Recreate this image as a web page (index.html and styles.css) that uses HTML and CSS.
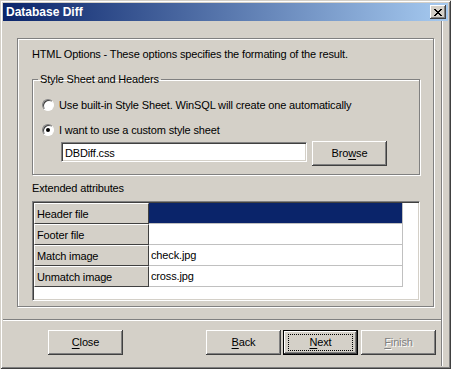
FILE: index.html
```html
<!DOCTYPE html>
<html lang="en">
<head>
    <meta charset="UTF-8">
    <title>Database Diff</title>
    <link rel="stylesheet" href="styles.css">
</head>
<body>
    <div class="window">
        <div class="titlebar">
            <span class="title">Database Diff</span>
            <div class="close-btn">
                <svg width="8" height="7" viewBox="0 0 8 7">
                    <path d="M0 0h2v1h1v1h2v-1h1v-1h2v1h-1v1h-1v1h-1v1h1v1h1v1h1v1h-2v-1h-1v-1h-2v1h-1v1h-2v-1h1v-1h1v-1h1v-1h-1v-1h-1v-1h-1z" fill="#000"/>
                </svg>
            </div>
        </div>

        <div class="content">
            <div class="panel">
                <p class="intro">HTML Options - These options specifies the formating of the result.</p>

                <fieldset class="group">
                    <legend>Style Sheet and Headers</legend>
                    <div class="radio-row first">
                        <span class="radio"></span>
                        <span>Use built-in Style Sheet. WinSQL will create one automatically</span>
                    </div>
                    <div class="radio-row">
                        <span class="radio checked"></span>
                        <span>I want to use a custom style sheet</span>
                    </div>
                    <div class="file-row">
                        <div class="textbox">DBDiff.css</div>
                        <div class="btn browse">Bro<u>w</u>se</div>
                    </div>
                </fieldset>

                <div class="section-label">Extended attributes</div>
                <div class="grid">
                    <table>
                        <tr>
                            <th>Header file</th>
                            <td class="selected"></td>
                        </tr>
                        <tr>
                            <th>Footer file</th>
                            <td></td>
                        </tr>
                        <tr>
                            <th>Match image</th>
                            <td>check.jpg</td>
                        </tr>
                        <tr>
                            <th>Unmatch image</th>
                            <td>cross.jpg</td>
                        </tr>
                    </table>
                </div>
            </div>

            <div class="separator"></div>

            <div class="buttons">
                <div class="btn"><u>C</u>lose</div>
                <div class="spacer"></div>
                <div class="btn"><u>B</u>ack</div>
                <div class="btn default"><span class="focus"><u>N</u>ext</span></div>
                <div class="btn disabled"><u>F</u>inish</div>
            </div>
        </div>
    </div>
</body>
</html>
```

FILE: styles.css
```css
body {
    margin: 0;
    background: #d4d0c8;
    font-family: "Liberation Sans", Arial, sans-serif;
    font-size: 11px;
    letter-spacing: -0.15px;
    color: #000;
}

.window {
    width: 451px;
    height: 369px;
    box-sizing: border-box;
    padding: 3px;
    background: #d4d0c8;
    box-shadow: inset 1px 1px #d4d0c8, inset -1px -1px #404040,
        inset 2px 2px #fff, inset -2px -2px #808080;
    display: flex;
    flex-direction: column;
}

.titlebar {
    height: 18px;
    display: flex;
    align-items: center;
    padding-left: 3px;
    background: linear-gradient(to right, #0a246a, #a6caf0);
}

.title {
    color: #fff;
    font-weight: bold;
    font-size: 12px;
    letter-spacing: 0;
}

.close-btn {
    width: 16px;
    height: 14px;
    box-sizing: border-box;
    margin-left: auto;
    margin-right: 2px;
    background: #d4d0c8;
    box-shadow: inset -1px -1px #404040, inset 1px 1px #fff,
        inset -2px -2px #808080;
    display: flex;
    align-items: center;
    justify-content: center;
}

.content {
    flex: 1;
    margin-right: 6px;
    border-right: 1px solid #808080;
    box-shadow: 1px 0 #fff;
}

.panel {
    margin: 17px 7px 0 14px;
    padding: 9px 13px 5px 14px;
    border: 1px solid #808080;
    box-shadow: inset 1px 1px #fff, 1px 1px #fff;
}

.intro {
    margin: 0;
    line-height: 13px;
}

/* group box */
.group {
    margin: 12px 0 0 0;
    padding: 0 0 8px 0;
    min-width: 0;
    border: 1px solid #808080;
    box-shadow: inset 1px 1px #fff, 1px 1px #fff;
}

.group legend {
    margin-left: 5px;
    padding: 0 2px;
    line-height: 13px;
}

.radio-row {
    display: flex;
    align-items: center;
    height: 16px;
    margin: 9px 0 0 9px;
    gap: 5px;
}

.radio-row.first {
    margin-top: 11px;
}

.radio {
    width: 12px;
    height: 12px;
    box-sizing: border-box;
    border-radius: 50%;
    background: #fff;
    border: 1px solid;
    border-color: #808080 #fff #fff #808080;
    box-shadow: inset 1px 1px #404040;
    position: relative;
}

.radio.checked::after {
    content: "";
    position: absolute;
    left: 3px;
    top: 3px;
    width: 4px;
    height: 4px;
    border-radius: 50%;
    background: #000;
}

.file-row {
    display: flex;
    gap: 5px;
    margin: 3px 0 0 28px;
}

.textbox {
    width: 246px;
    height: 20px;
    box-sizing: border-box;
    margin-top: 1px;
    padding: 3px 3px 0;
    background: #fff;
    border: 1px solid;
    border-color: #808080 #fff #fff #808080;
    box-shadow: inset 1px 1px #404040, inset -1px -1px #d4d0c8;
    line-height: 14px;
}

/* push buttons */
.btn {
    width: 75px;
    height: 25px;
    box-sizing: border-box;
    display: flex;
    align-items: center;
    justify-content: center;
    background: #d4d0c8;
    box-shadow: inset -1px -1px #404040, inset 1px 1px #fff,
        inset -2px -2px #808080;
    padding-bottom: 1px;
}

.btn u {
    text-decoration-thickness: 1px;
    text-underline-offset: 2px;
}

.section-label {
    margin-top: 7px;
    line-height: 13px;
}

/* attribute grid */
.grid {
    margin-top: 6px;
    height: 100px;
    box-sizing: border-box;
    background: #fff;
    border: 1px solid;
    border-color: #808080 #fff #fff #808080;
    box-shadow: inset 1px 1px #404040, inset -1px -1px #d4d0c8;
    padding: 1px;
}

.grid table {
    border-collapse: separate;
    border-spacing: 0;
}

.grid th,
.grid td {
    height: 21px;
    box-sizing: border-box;
    padding: 0 2px;
    font-weight: normal;
    text-align: left;
    white-space: nowrap;
}

.grid th {
    width: 115px;
    background: #d4d0c8;
    border-top: 1px solid #fff;
    border-left: 1px solid #fff;
    border-right: 1px solid #404040;
    border-bottom: 1px solid #404040;
}

.grid td {
    width: 254px;
    border-right: 1px solid #c0c0c0;
    border-bottom: 1px solid #c0c0c0;
}

.grid td.selected {
    background: #0a246a;
}

.separator {
    margin-top: 12px;
    border-top: 1px solid #808080;
    border-bottom: 1px solid #fff;
}

.buttons {
    display: flex;
    margin-top: 9px;
    padding: 0 5px 0 45px;
}

.spacer {
    flex: 1;
}

.btn.default {
    margin: 0 3px 0 2px;
    border: 1px solid #000;
    box-shadow: inset -1px -1px #404040, inset 1px 1px #fff,
        inset -2px -2px #808080;
}

.focus {
    display: flex;
    align-items: center;
    justify-content: center;
    width: 63px;
    height: 15px;
    border: 1px dotted #000;
}

.btn.disabled {
    color: #808080;
    text-shadow: 1px 1px #fff;
}
```
